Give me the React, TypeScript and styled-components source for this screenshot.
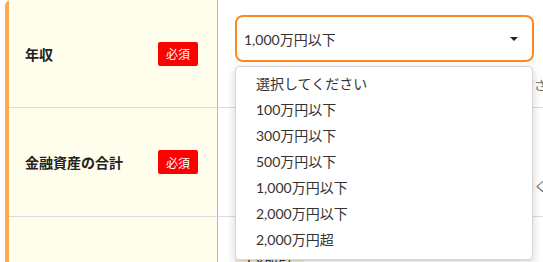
import styled, { createGlobalStyle } from "styled-components";

const options = [
  "選択してください",
  "100万円以下",
  "300万円以下",
  "500万円以下",
  "1,000万円以下",
  "2,000万円以下",
  "2,000万円超",
];

function App() {
  return (
    <>
      <GlobalStyle />
      <Page>
        <Table>
          <Row $height={107}>
            <LabelCell>
              <LabelText>年収</LabelText>
              <Badge>必須</Badge>
            </LabelCell>
            <FieldCell $gap={13}>
              <SelectWrap>
                <SelectBox>
                  <span>1,000万円以下</span>
                  <Caret />
                </SelectBox>
                <Menu>
                  {options.map((o) => (
                    <MenuItem key={o}>{o}</MenuItem>
                  ))}
                </Menu>
              </SelectWrap>
              <Note>※前年の税込み年収を目安に近いものをお選びください</Note>
            </FieldCell>
          </Row>

          <Row $height={108}>
            <LabelCell>
              <LabelText>金融資産の合計</LabelText>
              <Badge>必須</Badge>
            </LabelCell>
            <FieldCell $gap={6}>
              <SelectBox $muted>
                <span>選択してください</span>
                <Caret />
              </SelectBox>
              <Note>※預貯金・株式・投資信託などの合計金額をご入力ください</Note>
            </FieldCell>
          </Row>

          <Row $height={120}>
            <LabelCell>
              <LabelText>投資経験</LabelText>
            </LabelCell>
            <FieldCell $gap={8}>
              <ChoiceRow>
                <Choice>FX取引</Choice>
              </ChoiceRow>
            </FieldCell>
          </Row>
        </Table>
      </Page>
    </>
  );
}

const GlobalStyle = createGlobalStyle`
  html, body {
    margin: 0;
    padding: 0;
    background: #fff;
    overflow: hidden;
  }
  body {
    font-family: "Lato", "Noto Sans CJK JP", sans-serif;
    color: #333;
  }
`;

const Page = styled.div`
  width: 543px;
  height: 262px;
  overflow: hidden;
  padding-left: 5px;
  box-sizing: border-box;
`;

const Table = styled.div`
  width: 600px;
  border-left: 4px solid #ffa94d;
  border-top-left-radius: 6px;
  display: flex;
  flex-direction: column;
`;

const Row = styled.div<{ $height: number }>`
  display: grid;
  grid-template-columns: 209px 1fr;
  height: ${({ $height }) => $height}px;
  border-bottom: 1px solid #dcdcdc;
  flex-shrink: 0;
`;

const LabelCell = styled.div`
  background: #fffdec;
  border-right: 1px solid #ffa94d;
  display: flex;
  align-items: center;
  justify-content: space-between;
  padding: 0 19px 0 16px;
`;

const LabelText = styled.span`
  font-size: 14px;
  font-weight: 700;
  color: #222;
`;

const Badge = styled.span`
  background: #ff0000;
  color: #fff;
  font-size: 12px;
  width: 40px;
  height: 24px;
  border-radius: 2px;
  display: flex;
  align-items: center;
  justify-content: center;
`;

const FieldCell = styled.div<{ $gap: number }>`
  padding: 15px 0 0 17px;
  display: flex;
  flex-direction: column;
  gap: ${({ $gap }) => $gap}px;
  min-width: 0;
`;

const SelectWrap = styled.div`
  position: relative;
  width: 299px;
`;

const SelectBox = styled.div<{ $muted?: boolean }>`
  width: ${({ $muted }) => ($muted ? "290px" : "299px")};
  height: 47px;
  box-sizing: border-box;
  border: ${({ $muted }) => ($muted ? "1px solid #f0a050" : "2px solid #fd8a1f")};
  border-radius: 8px;
  display: flex;
  align-items: center;
  justify-content: space-between;
  padding: 0 14px 0 7px;
  font-size: 14px;
  color: #333;
`;

const Caret = styled.span`
  width: 0;
  height: 0;
  border-left: 4px solid transparent;
  border-right: 4px solid transparent;
  border-top: 4px solid #222;
`;

const Menu = styled.ul`
  position: absolute;
  top: 51px;
  left: 0;
  width: 298px;
  box-sizing: border-box;
  margin: 0;
  padding: 4px 0 6px;
  list-style: none;
  background: #fff;
  border: 1px solid #d6d6d6;
  border-radius: 4px;
  box-shadow: 0 3px 10px rgba(0, 0, 0, 0.18);
  z-index: 10;
`;

const MenuItem = styled.li`
  height: 26px;
  line-height: 26px;
  padding-left: 20px;
  font-size: 14px;
  color: #333;
`;

const Note = styled.p`
  margin: 0;
  font-size: 13px;
  color: #666;
  white-space: nowrap;
`;

const ChoiceRow = styled.div`
  display: flex;
  gap: 10px;
  padding-top: 14px;
`;

const Choice = styled.div`
  background: #f7f1d8;
  border-radius: 4px;
  padding: 6px 12px;
  font-size: 14px;
  color: #333;
`;

export default App;
